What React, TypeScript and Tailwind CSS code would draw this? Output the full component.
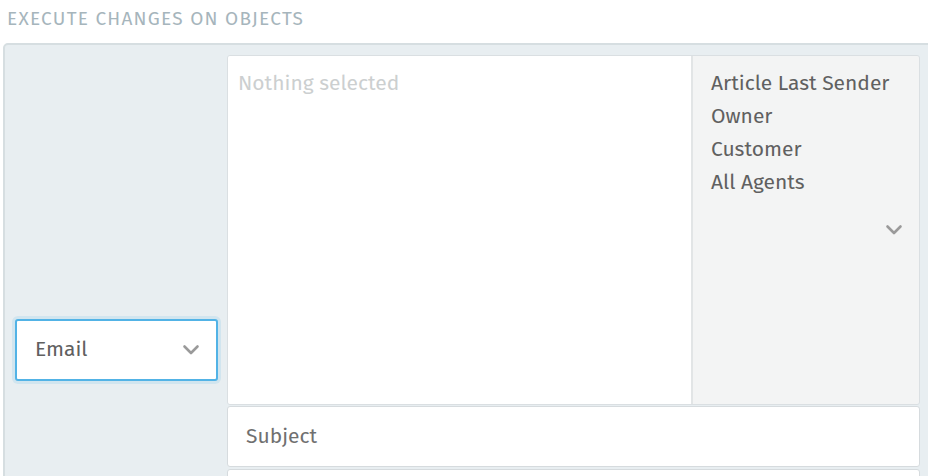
import React from "react";

const Chevron = () => (
  <svg width="18" height="12" viewBox="0 0 18 12" fill="none">
    <path d="M2.5 2.5 L9 9 L15.5 2.5" stroke="#9a9a9a" strokeWidth="2.6" strokeLinecap="round" strokeLinejoin="round" />
  </svg>
);

export default function App() {
  const font = { fontFamily: '"Fira Sans", "Open Sans", "Noto Sans", sans-serif' };
  return (
    <div className="w-[928px] h-[476px] overflow-hidden bg-white" style={font}>
      <div className="pt-[8px] pl-[7px] h-[43px] text-[19px] leading-[22px] tracking-[1.25px] text-[#a6b5bc]">
        EXECUTE CHANGES ON OBJECTS
      </div>
      <div className="ml-[3px] w-[960px] h-[600px] rounded-tl-[5px] border-2 border-[#d6dee1] bg-[#e8eef1] flex">
        <div className="w-[222px] shrink-0 pl-[10px] pr-[9px] pt-[274px]">
          <div className="h-[62px] rounded-[3px] border-2 border-[#52b3e6] bg-white shadow-[0_0_0_3px_rgba(82,179,230,0.15)] flex items-center justify-between pl-[18px] pr-[16px]">
            <span className="text-[21px] text-[#606060]">Email</span>
            <Chevron />
          </div>
        </div>
        <div className="w-[693px] shrink-0 pt-[10px] flex flex-col gap-[1px]">
          <div className="h-[350px] rounded-[3px] border border-[#dadfe2] flex overflow-hidden">
            <div className="flex-1 bg-white pl-[10px] pt-[11px] text-[21px] leading-[32px] text-[#cccfd0]">
              Nothing selected
            </div>
            <div className="w-[228px] shrink-0 border-l-2 border-[#e2e5e6] bg-[#f3f4f4] pl-[18px] pr-[16px] pt-[11px] flex flex-col relative">
              {["Article Last Sender", "Owner", "Customer", "All Agents"].map((t) => (
                <div key={t} className="text-[21px] leading-[33px] text-[#606060]">
                  {t}
                </div>
              ))}
              <div className="absolute right-[16px] top-[168px]">
                <Chevron />
              </div>
            </div>
          </div>
          <div className="h-[61px] rounded-[3px] border border-[#d6dbde] bg-white flex items-center pl-[18px] text-[21px] text-[#707070]">
            Subject
          </div>
          <div className="h-[60px] mt-[1px] rounded-[3px] border border-[#d6dbde] bg-white" />
        </div>
      </div>
    </div>
  );
}
